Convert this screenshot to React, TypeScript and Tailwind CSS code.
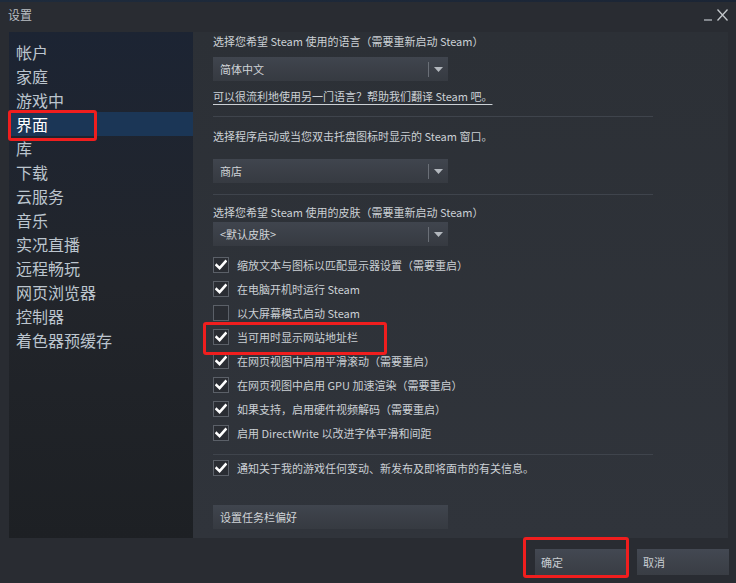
import React from "react";

const FONT = { fontFamily: '"Noto Sans CJK SC", "Noto Sans", Arial, sans-serif' };

function Dropdown({ label, className = "" }: { label: string; className?: string }) {
  return (
    <div className={`w-[235px] h-[24px] flex items-center bg-gradient-to-b from-[#40454e] to-[#363a41] ${className}`}>
      <span className="flex-1 pl-[7px] text-[11px] text-[#d0d4d8] leading-none">{label}</span>
      <div className="w-px h-[15px] bg-[#6a6f77]" />
      <div className="w-[19px] flex justify-center">
        <svg width="9" height="5" viewBox="0 0 9 5">
          <path d="M0 0 L9 0 L4.5 5 Z" fill="#b3b8be" />
        </svg>
      </div>
    </div>
  );
}

function Check({ label, checked = true }: { label: string; checked?: boolean }) {
  return (
    <div className="h-[24px] flex items-center">
      <div className="w-[16px] h-[16px] border border-[#5b6068] bg-[#2a2d33] flex items-center justify-center">
        {checked && (
          <svg width="12" height="12" viewBox="0 0 12 12">
            <path d="M1.5 6.2 L4.6 9.2 L10.6 2.4" fill="none" stroke="#ffffff" strokeWidth="2.6" strokeLinecap="square" />
          </svg>
        )}
      </div>
      <span className="ml-[8px] text-[11px] text-[#cbd0d5] leading-none">{label}</span>
    </div>
  );
}

export default function App() {
  const side = [
    "帐户",
    "家庭",
    "游戏中",
    "界面",
    "库",
    "下载",
    "云服务",
    "音乐",
    "实况直播",
    "远程畅玩",
    "网页浏览器",
    "控制器",
    "着色器预缓存",
  ];
  return (
    <div className="w-[736px] h-[583px] bg-[#292c32] relative overflow-hidden flex flex-col" style={FONT}>
      <div className="h-[2px] bg-gradient-to-r from-[#1e2b3c] to-[#1b2535]" />
      {/* title bar */}
      <div className="h-[30px] flex items-center pl-[8px] pr-[8px]">
        <span className="text-[12px] text-[#b9bec3] leading-none -mt-[4px]">设置</span>
        <div className="flex-1" />
        <div className="flex items-end gap-[4px] -mt-[4px]">
          <svg width="9" height="12" viewBox="0 0 9 12">
            <path d="M0 11 H8" stroke="#b3b8be" strokeWidth="1.3" />
          </svg>
          <svg width="11" height="12" viewBox="0 0 11 12">
            <path d="M0.5 0.5 L10.5 11.5 M10.5 0.5 L0.5 11.5" stroke="#c3c7cb" strokeWidth="1.3" />
          </svg>
        </div>
      </div>
      {/* main */}
      <div className="flex h-[506px] pl-[9px] pr-[8px]">
        {/* sidebar */}
        <div className="w-[184px] bg-gradient-to-b from-[#1c2433] via-[#22252b] to-[#1d2024] pt-[8px] flex flex-col">
          {side.map((s) => (
            <div
              key={s}
              className={`h-[24px] flex items-center pl-[7px] text-[16px] leading-none ${
                s === "界面" ? "bg-[#1b3656] text-white" : "text-[#bcc5ce]"
              }`}
            >
              {s}
            </div>
          ))}
        </div>
        {/* content */}
        <div className="flex-1 bg-gradient-to-b from-[#2c3036] to-[#30343b] pl-[20px] flex flex-col">
          <div className="mt-[1px] h-[16px] flex items-center text-[11px] text-[#cbd0d5] leading-none">
            选择您希望 Steam 使用的语言（需要重新启动 Steam）
          </div>
          <Dropdown label="简体中文" className="mt-[8px]" />
          <div className="mt-[7px] h-[16px] flex items-center text-[11px] text-[#cbd0d5] leading-none">
            <span className="underline underline-offset-[3px]">可以很流利地使用另一门语言？帮助我们翻译 Steam 吧。</span>
          </div>
          <div className="mt-[12px] w-[440px] h-px bg-[#3f444c]" />
          <div className="mt-[11px] h-[16px] flex items-center text-[11px] text-[#cbd0d5] leading-none">
            选择程序启动或当您双击托盘图标时显示的 Steam 窗口。
          </div>
          <Dropdown label="商店" className="mt-[15px]" />
          <div className="mt-[11px] w-[440px] h-px bg-[#3f444c]" />
          <div className="mt-[9px] h-[16px] flex items-center text-[11px] text-[#cbd0d5] leading-none">
            选择您希望 Steam 使用的皮肤（需要重新启动 Steam）
          </div>
          <Dropdown label="<默认皮肤>" className="mt-[2px]" />
          <div className="mt-[7px] flex flex-col">
            <Check label="缩放文本与图标以匹配显示器设置（需要重启）" />
            <Check label="在电脑开机时运行 Steam" />
            <Check label="以大屏幕模式启动 Steam" checked={false} />
            <Check label="当可用时显示网站地址栏" />
            <Check label="在网页视图中启用平滑滚动（需要重启）" />
            <Check label="在网页视图中启用 GPU 加速渲染（需要重启）" />
            <Check label="如果支持，启用硬件视频解码（需要重启）" />
            <Check label="启用 DirectWrite 以改进字体平滑和间距" />
          </div>
          <div className="mt-[9px] w-[440px] h-px bg-[#3f444c]" />
          <div className="mt-[1px]">
            <Check label="通知关于我的游戏任何变动、新发布及即将面市的有关信息。" />
          </div>
          <div className="mt-[25px] w-[235px] h-[24px] flex items-center pl-[7px] bg-gradient-to-b from-[#40454e] to-[#363a41] text-[11px] text-[#d0d4d8] leading-none">
            设置任务栏偏好
          </div>
        </div>
      </div>
      {/* bottom buttons */}
      <div className="flex-1 flex justify-end items-start pt-[11px] pr-[7px] gap-[10px]">
        <div className="w-[92px] h-[26px] flex items-center pl-[6px] bg-gradient-to-b from-[#434852] to-[#393d44] text-[11px] text-[#c8cdd2] leading-none">
          确定
        </div>
        <div className="w-[92px] h-[26px] flex items-center pl-[6px] bg-gradient-to-b from-[#434852] to-[#393d44] text-[11px] text-[#c8cdd2] leading-none">
          取消
        </div>
      </div>
      {/* red annotation boxes */}
      <div className="absolute left-[8px] top-[110px] w-[89px] h-[31px] border-[3px] border-[#f01e1e] rounded-[3px]" />
      <div className="absolute left-[203px] top-[322px] w-[184px] h-[33px] border-[3px] border-[#f01e1e] rounded-[3px]" />
      <div className="absolute left-[523px] top-[537px] w-[106px] h-[41px] border-[3px] border-[#f01e1e] rounded-[3px]" />
    </div>
  );
}
